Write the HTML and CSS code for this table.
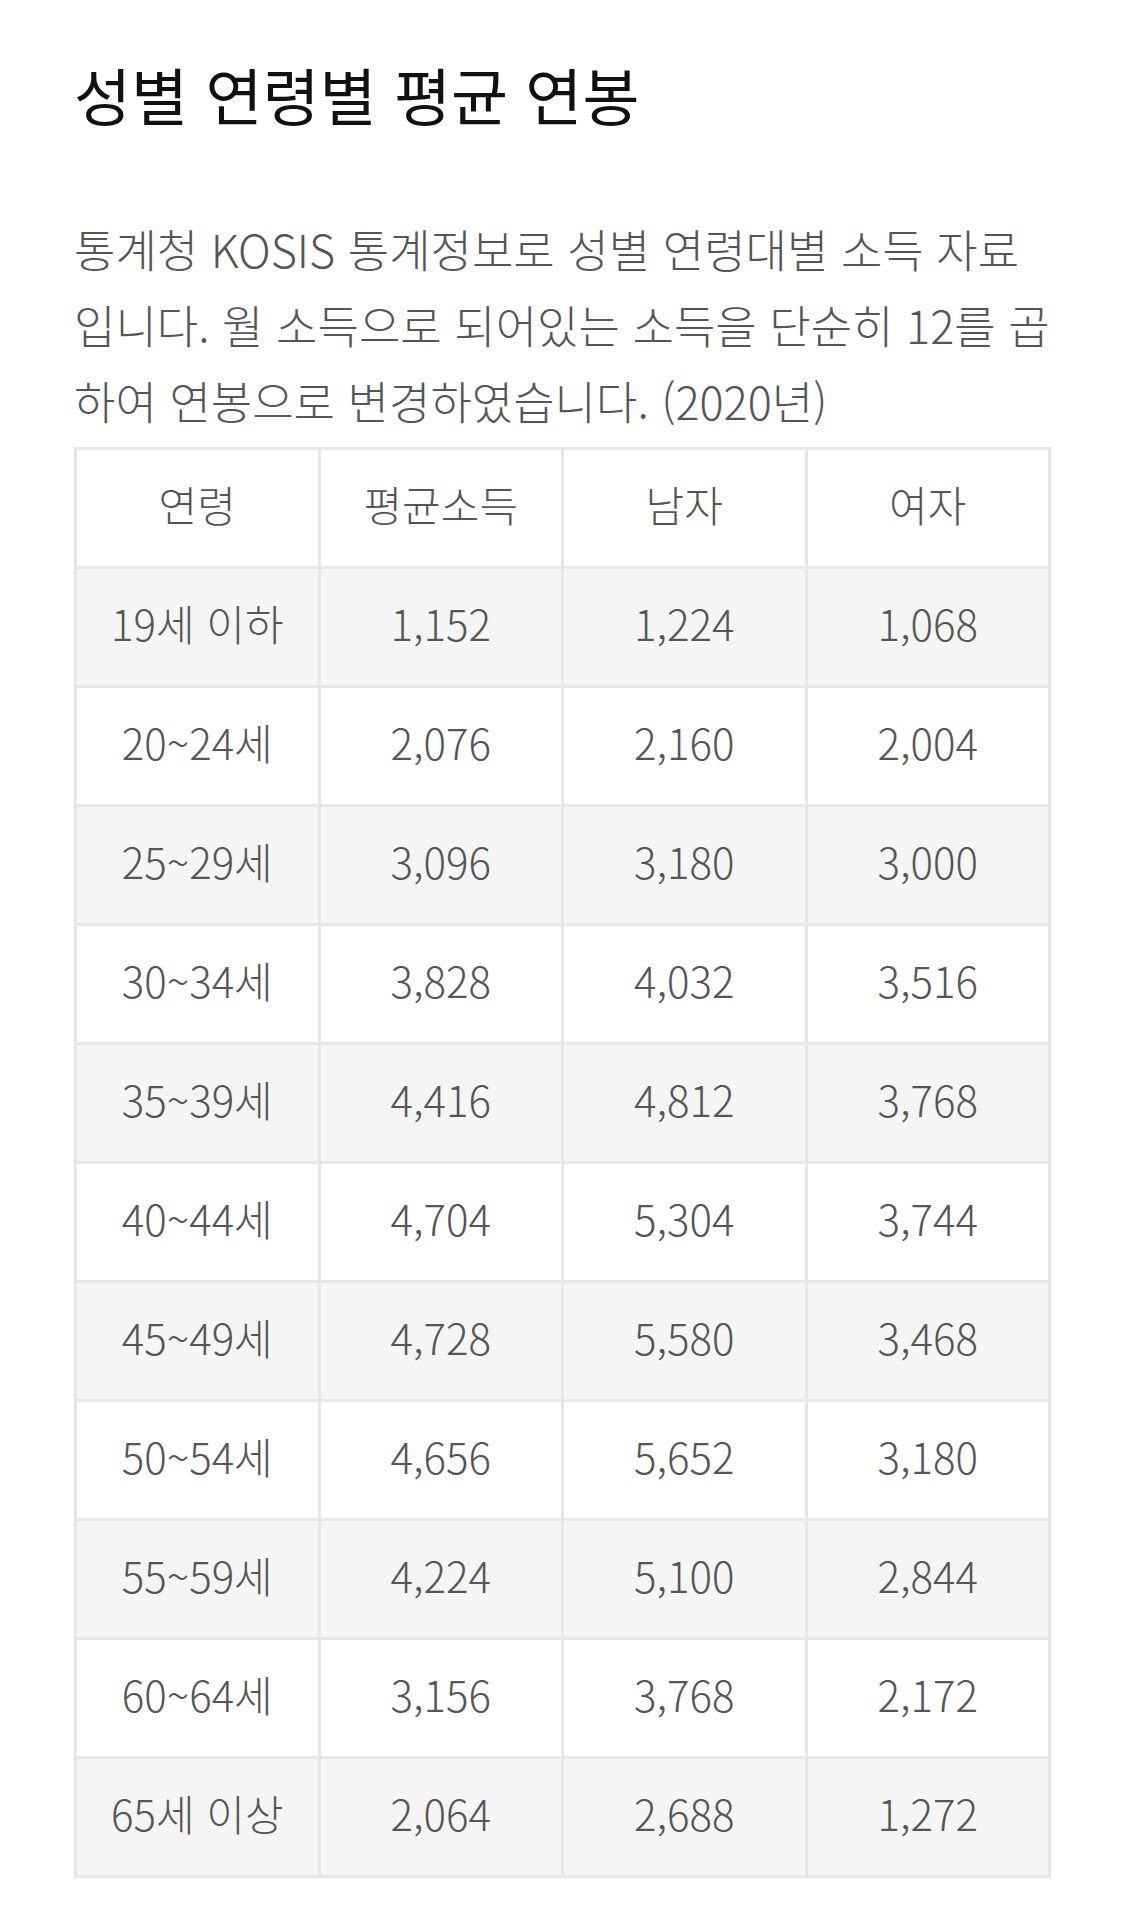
FILE: index.html
```html
<!DOCTYPE html>
<html lang="ko">
<head>
<meta charset="utf-8">
<link rel="stylesheet" href="styles.css">
</head>
<body>
<div class="page">
  <h1 class="title">성별 연령별 평균 연봉</h1>
  <p class="desc">통계청 KOSIS 통계정보로 성별 연령대별 소득 자료 입니다. 월 소득으로 되어있는 소득을 단순히 12를 곱하여 연봉으로 변경하였습니다. (2020년)</p>
  <table class="data">
    <thead>
      <tr><th>연령</th><th>평균소득</th><th>남자</th><th>여자</th></tr>
    </thead>
    <tbody>
      <tr><td>19세 이하</td><td>1,152</td><td>1,224</td><td>1,068</td></tr>
      <tr><td>20~24세</td><td>2,076</td><td>2,160</td><td>2,004</td></tr>
      <tr><td>25~29세</td><td>3,096</td><td>3,180</td><td>3,000</td></tr>
      <tr><td>30~34세</td><td>3,828</td><td>4,032</td><td>3,516</td></tr>
      <tr><td>35~39세</td><td>4,416</td><td>4,812</td><td>3,768</td></tr>
      <tr><td>40~44세</td><td>4,704</td><td>5,304</td><td>3,744</td></tr>
      <tr><td>45~49세</td><td>4,728</td><td>5,580</td><td>3,468</td></tr>
      <tr><td>50~54세</td><td>4,656</td><td>5,652</td><td>3,180</td></tr>
      <tr><td>55~59세</td><td>4,224</td><td>5,100</td><td>2,844</td></tr>
      <tr><td>60~64세</td><td>3,156</td><td>3,768</td><td>2,172</td></tr>
      <tr><td>65세 이상</td><td>2,064</td><td>2,688</td><td>1,272</td></tr>
    </tbody>
  </table>
</div>
</body>
</html>
```
FILE: styles.css
```css
html, body {
  margin: 0;
  padding: 0;
  background: #ffffff;
}
.page {
  width: 977px;
  padding: 0 0 0 74px;
  font-family: "Noto Sans CJK KR", "Noto Sans", sans-serif;
}
.title {
  margin: 0;
  padding-top: 52px;
  font-size: 62px;
  font-weight: 400;
  line-height: 84px;
  color: #111111;
}
.desc {
  margin: 75px 0 0 0;
  font-size: 45px;
  font-weight: 300;
  line-height: 76px;
  color: #555555;
  word-break: break-all;
}
.data {
  margin-top: 8px;
  width: 977px;
  border-collapse: collapse;
  table-layout: fixed;
  border: 3px solid #e6e6e6;
}
.data th, .data td {
  border: 3px solid #e6e6e6;
  height: 107px;
  padding: 0 0 9px 0;
  text-align: center;
  font-size: 42px;
  font-weight: 300;
  color: #555555;
}
.data tbody tr:nth-child(odd) td {
  background: #f5f5f5;
}
```
